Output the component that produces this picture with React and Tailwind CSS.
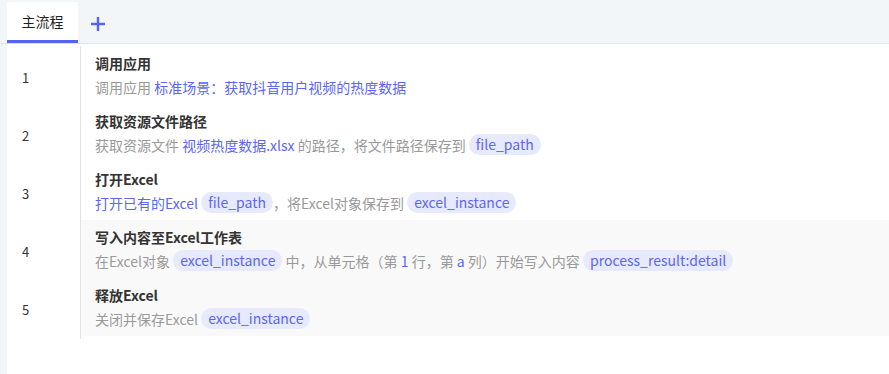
const Pill = ({ children }) => (
  <span className="relative top-[1px] inline-block h-[21px] rounded-full bg-[#e7e9fd] px-[7px] align-top leading-[21px] text-[#5b66f3]">
    {children}
  </span>
)

const Blue = ({ children }) => <span className="text-[#5b66f3]">{children}</span>

const steps = [
  {
    title: '调用应用',
    desc: (
      <>
        调用应用 <Blue>标准场景：获取抖音用户视频的热度数据</Blue>
      </>
    ),
  },
  {
    title: '获取资源文件路径',
    desc: (
      <>
        获取资源文件 <Blue>视频热度数据.xlsx</Blue> 的路径，将文件路径保存到 <Pill>file_path</Pill>
      </>
    ),
  },
  {
    title: '打开Excel',
    desc: (
      <>
        <Blue>打开已有的Excel</Blue> <Pill>file_path</Pill>，将Excel对象保存到 <Pill>excel_instance</Pill>
      </>
    ),
  },
  {
    title: '写入内容至Excel工作表',
    gray: true,
    desc: (
      <>
        在Excel对象 <Pill>excel_instance</Pill> 中，从单元格（第 <Blue>1</Blue> 行，第 <Blue>a</Blue> 列）开始写入内容 <Pill>process_result:detail</Pill>
      </>
    ),
  },
  {
    title: '释放Excel',
    gray: true,
    desc: (
      <>
        关闭并保存Excel <Pill>excel_instance</Pill>
      </>
    ),
  },
]

export default function App() {
  return (
    <div
      className="flex h-screen flex-col bg-[#f3f6f9] text-[14px]"
      style={{ fontFamily: '"Noto Sans CJK SC", "Noto Sans", sans-serif' }}
    >
      <div className="flex h-[44px] shrink-0 items-end border-b border-[#dde3ea] pl-[7px]">
        <div className="flex h-[41px] w-[71px] items-center justify-center border-b-[3px] border-[#5563f2] bg-white text-[14px] text-[#1f1f1f]">
          主流程
        </div>
        <div className="flex h-[41px] w-[40px] items-center justify-center pt-[2px] text-[#5563f2]">
          <svg width="16" height="16" viewBox="0 0 16 16" fill="none" stroke="currentColor" strokeWidth="2.4">
            <path d="M8 1v14M1 8h14" />
          </svg>
        </div>
      </div>
      <div className="ml-[7px] flex-1 bg-white pt-[2px]">
        {steps.map((s, i) => (
          <div key={i} className="flex h-[58px]">
            <div className="flex w-[73px] items-center pl-[15px] pt-[6px] text-[13px] text-[#333]">
              {i + 1}
            </div>
            <div
              className={`flex flex-1 flex-col border-l border-[#e2e2e2] pl-[14px] pt-[7px] ${
                s.gray ? 'bg-[#f9f9f9]' : 'bg-white'
              }`}
            >
              <div className="h-[20px] font-bold leading-[20px] text-[#333]">{s.title}</div>
              <div className="mt-[2px] h-[24px] whitespace-nowrap leading-[24px] text-[#999]">{s.desc}</div>
            </div>
          </div>
        ))}
        <div className="ml-[73px] h-[3px] w-px bg-[#e2e2e2]" />
      </div>
    </div>
  )
}
